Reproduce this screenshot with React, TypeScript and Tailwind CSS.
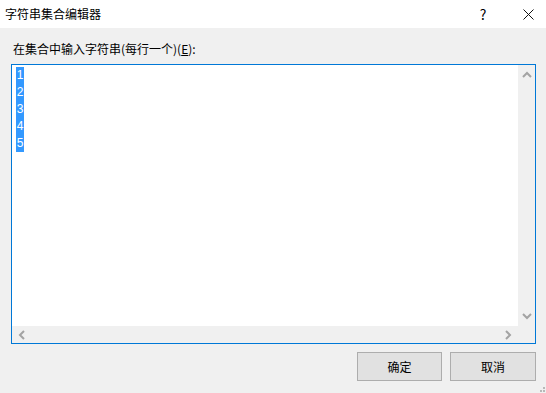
import { Fragment } from "react";

const lines = ["1", "2", "3", "4", "5"];

function Chevron({ dir }: { dir: "up" | "down" | "left" | "right" }) {
  const d = {
    up: "M1 6 L5 2 L9 6",
    down: "M1 2 L5 6 L9 2",
    left: "M6 1 L2 5 L6 9",
    right: "M2 1 L6 5 L2 9",
  }[dir];
  const vertical = dir === "up" || dir === "down";
  return (
    <svg
      width={vertical ? 10 : 8}
      height={vertical ? 8 : 10}
      viewBox={vertical ? "0 0 10 8" : "0 0 8 10"}
    >
      <path d={d} fill="none" stroke="#a3a3a3" strokeWidth="2" />
    </svg>
  );
}

export default function App() {
  return (
    <div
      className="flex h-[393px] w-[546px] flex-col overflow-hidden bg-[#f0f0f0] text-black"
      style={{ fontFamily: '"Noto Sans CJK SC", "Noto Sans", sans-serif' }}
    >
      {/* title bar */}
      <div className="flex h-[28px] shrink-0 items-center bg-white">
        <span className="ml-[5px] text-[12px] leading-[28px]">字符串集合编辑器</span>
        <div className="ml-auto flex h-full items-center">
          <span className="mr-[4px] flex h-full w-[46px] items-center justify-center text-[14px]">?</span>
          <span className="flex h-full w-[36px] items-center justify-center">
            <svg width="11" height="11" viewBox="0 0 11 11">
              <path d="M0.5 0.5 L10.5 10.5 M10.5 0.5 L0.5 10.5" stroke="#111" strokeWidth="1" />
            </svg>
          </span>
        </div>
      </div>

      {/* body */}
      <div className="flex flex-1 flex-col pl-[11px] pr-[10px]">
        <div className="mt-[12px] h-[17px] pl-[2px] text-[12px] leading-[17px]">
          在集合中输入字符串(每行一个)(<span className="underline">E</span>):
        </div>

        <div className="mt-[7px] flex h-[280px] flex-col border border-[#0078d7] bg-white">
          <div className="flex min-h-0 flex-1">
            <div className="flex-1 pl-[4px] pt-[2px]">
              {lines.map((l) => (
                <Fragment key={l}>
                  <div className="h-[17px] w-[8px] bg-[#3399ff] text-center text-[12px] leading-[17px] text-white"
                    style={{ fontFamily: '"Liberation Sans", sans-serif' }}>
                    {l}
                  </div>
                </Fragment>
              ))}
            </div>
            <div className="flex w-[17px] flex-col items-center justify-between bg-[#f0f0f0] py-[6px]">
              <Chevron dir="up" />
              <Chevron dir="down" />
            </div>
          </div>
          <div className="flex h-[17px] shrink-0 bg-[#f0f0f0]">
            <div className="flex flex-1 items-center justify-between px-[6px]">
              <Chevron dir="left" />
              <Chevron dir="right" />
            </div>
            <div className="w-[17px]" />
          </div>
        </div>

        <div className="mt-[8px] flex justify-end gap-[8px]">
          <button className="h-[29px] w-[85px] border border-[#adadad] bg-[#e1e1e1] text-[12px]">
            确定
          </button>
          <button className="h-[29px] w-[86px] border border-[#adadad] bg-[#e1e1e1] text-[12px]">
            取消
          </button>
        </div>
      </div>

      {/* size grip */}
      <div className="relative h-0">
        <div className="absolute bottom-0 right-0 grid grid-cols-3 gap-[1px] p-[1px]">
          <span className="h-[2px] w-[2px]" />
          <span className="h-[2px] w-[2px]" />
          <span className="h-[2px] w-[2px] bg-[#b8b8b8]" />
          <span className="h-[2px] w-[2px]" />
          <span className="h-[2px] w-[2px] bg-[#b8b8b8]" />
          <span className="h-[2px] w-[2px] bg-[#b8b8b8]" />
        </div>
      </div>
    </div>
  );
}
